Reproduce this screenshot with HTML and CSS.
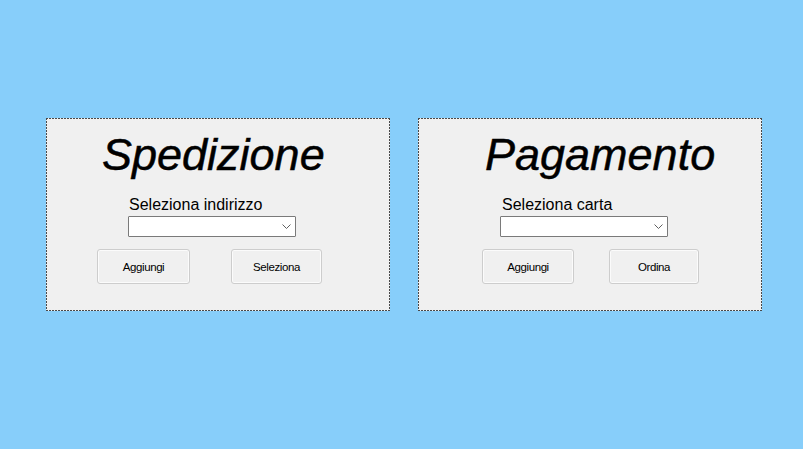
FILE: index.html
```html
<!DOCTYPE html>
<html>
<head>
<meta charset="utf-8">
<link rel="stylesheet" href="styles.css">
</head>
<body>
<div class="screen">
  <section class="panel panel-ship">
    <h1 class="title">Spedizione</h1>
    <div class="label">Seleziona indirizzo</div>
    <div class="combo"><svg class="chev" width="9" height="5" viewBox="0 0 9 5"><path d="M0.5 0.5 L4.5 4.5 L8.5 0.5" fill="none" stroke="#606060" stroke-width="1"/></svg></div>
    <div class="buttons">
      <button class="btn btn-a">Aggiungi</button>
      <button class="btn btn-b">Seleziona</button>
    </div>
  </section>
  <section class="panel panel-pay">
    <h1 class="title">Pagamento</h1>
    <div class="label">Seleziona carta</div>
    <div class="combo"><svg class="chev" width="9" height="5" viewBox="0 0 9 5"><path d="M0.5 0.5 L4.5 4.5 L8.5 0.5" fill="none" stroke="#606060" stroke-width="1"/></svg></div>
    <div class="buttons">
      <button class="btn btn-a">Aggiungi</button>
      <button class="btn btn-b">Ordina</button>
    </div>
  </section>
</div>
</body>
</html>
```

FILE: styles.css
```css
html, body {
  margin: 0;
  padding: 0;
  background: #87cefa;
  width: 803px;
  height: 449px;
  overflow: hidden;
  font-family: "Liberation Sans", Arial, sans-serif;
}
.screen {
  display: flex;
  gap: 28px;
  padding: 118px 0 0 46px;
}
.panel {
  box-sizing: border-box;
  width: 344px;
  height: 193px;
  padding: 1px;
  background:
    repeating-linear-gradient(90deg, #4a4a4a 0 2px, transparent 2px 3px) left top / 100% 1px no-repeat,
    repeating-linear-gradient(90deg, #4a4a4a 0 2px, transparent 2px 3px) left bottom / 100% 1px no-repeat,
    repeating-linear-gradient(180deg, #4a4a4a 0 2px, transparent 2px 3px) left top / 1px 100% no-repeat,
    repeating-linear-gradient(180deg, #4a4a4a 0 2px, transparent 2px 3px) right top / 1px 100% no-repeat,
    #f0f0f0;
  display: flex;
  flex-direction: column;
  align-items: flex-start;
}
.title {
  margin: 0;
  font-weight: normal;
  font-style: italic;
  font-size: 45px;
  line-height: 52px;
  height: 52px;
  color: #000;
  -webkit-text-stroke: 0.5px #000;
  margin-top: 10px;
}
.label {
  font-size: 16px;
  line-height: 18px;
  color: #000;
  margin-top: 15px;
}
.combo {
  box-sizing: border-box;
  width: 168px;
  height: 21px;
  background: #fff;
  border: 1px solid #7a7a7a;
  border-radius: 1px;
  display: flex;
  align-items: center;
  justify-content: flex-end;
  padding-right: 4px;
  margin-top: 2px;
}
.buttons {
  display: flex;
  margin-top: 12px;
}
.btn {
  box-sizing: border-box;
  height: 35px;
  background: #f0f0f0;
  border: 1px solid #cdcdcd;
  border-radius: 3px;
  box-shadow: inset 0 0 0 1px #fbfbfb;
  font-family: "Liberation Sans", Arial, sans-serif;
  font-size: 11.5px;
  letter-spacing: -0.4px;
  color: #000;
  padding: 0;
  margin: 0;
}
.panel-ship .title { margin-left: 55px; }
.panel-ship .label { margin-left: 82px; }
.panel-ship .combo { margin-left: 81px; }
.panel-ship .buttons { margin-left: 50px; }
.panel-ship .btn-a { width: 93px; }
.panel-ship .btn-b { width: 91px; margin-left: 41px; }

.panel-pay .title { margin-left: 66px; }
.panel-pay .label { margin-left: 83px; }
.panel-pay .combo { margin-left: 81px; }
.panel-pay .buttons { margin-left: 63px; }
.panel-pay .btn-a { width: 92px; }
.panel-pay .btn-b { width: 90px; margin-left: 35px; }
```
